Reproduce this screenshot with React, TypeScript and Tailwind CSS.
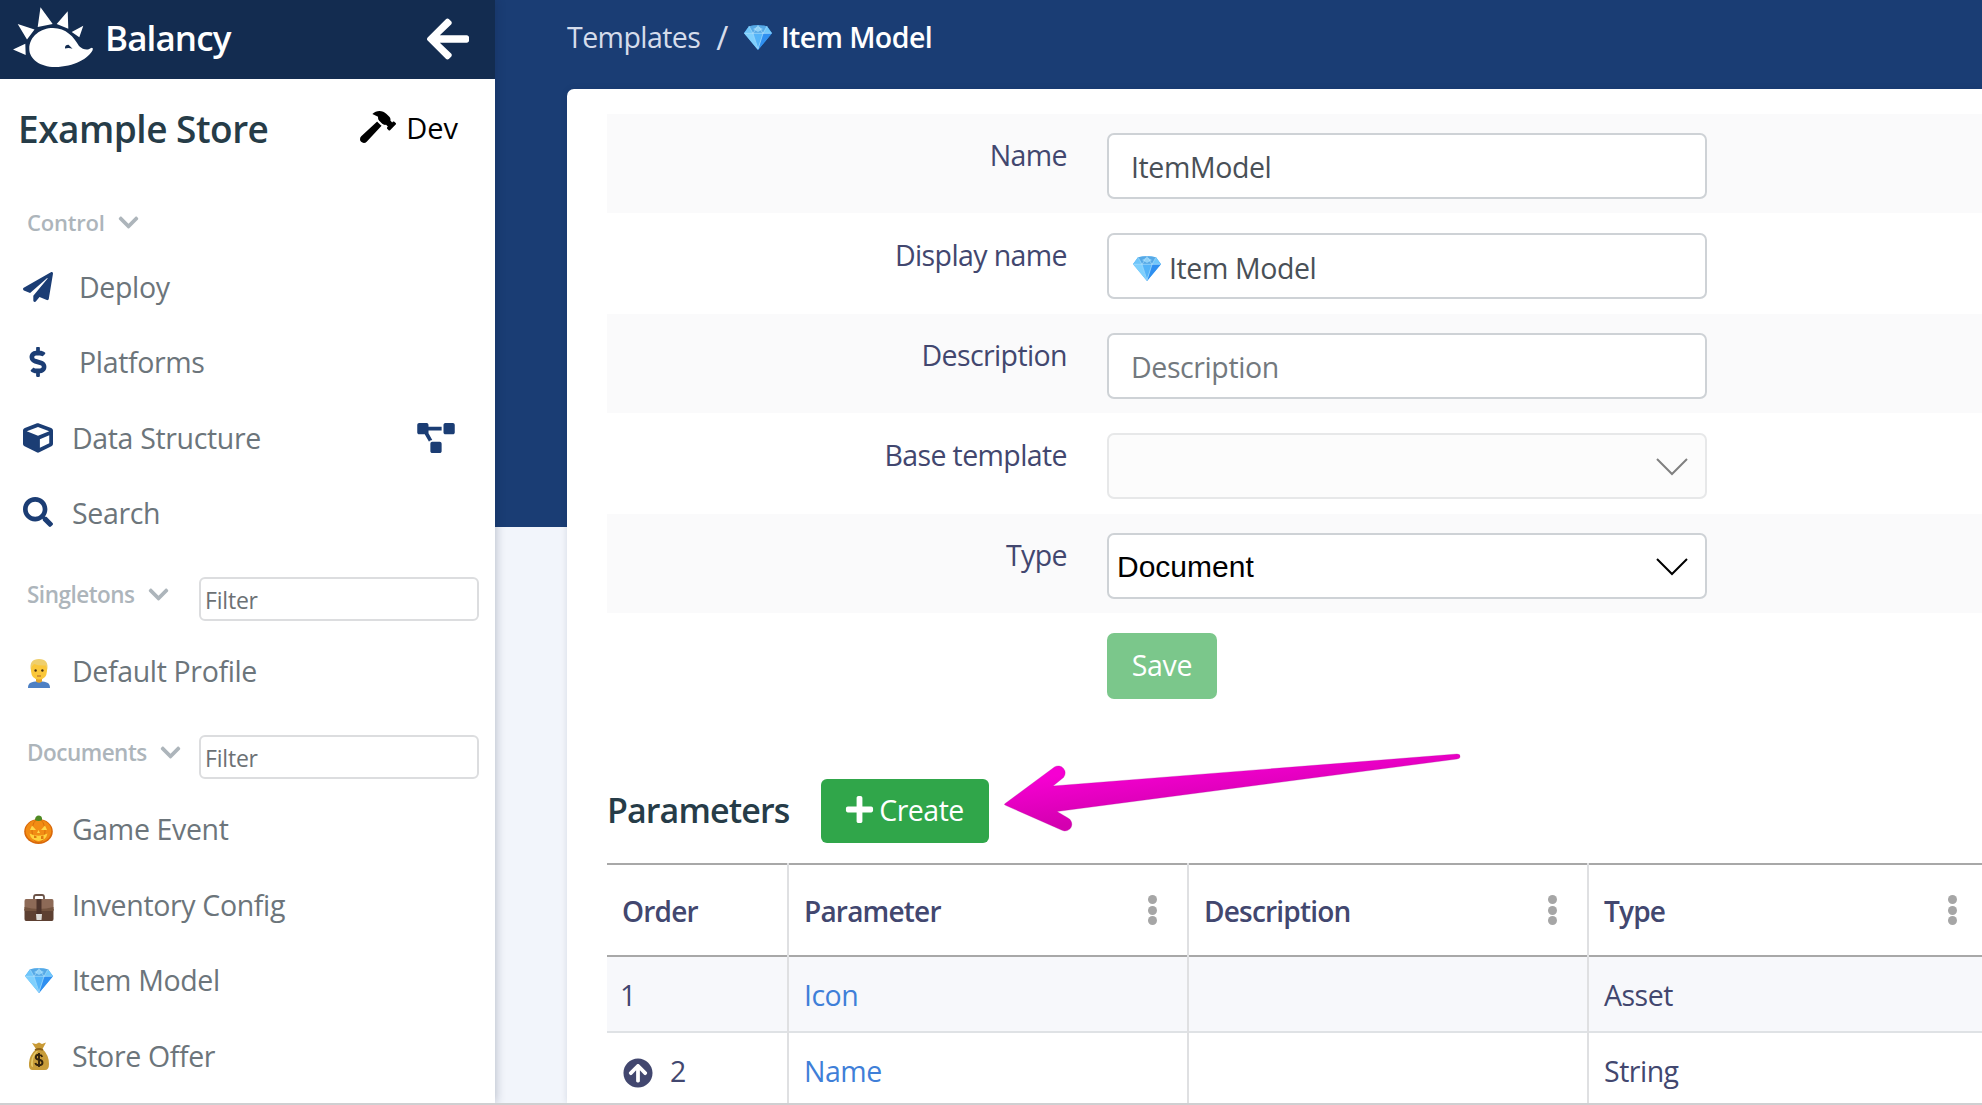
import React from 'react';
import type { ReactNode } from 'react';
import {
  FaArrowCircleUp,
  FaArrowLeft,
  FaChevronDown,
  FaCube,
  FaDollarSign,
  FaHammer,
  FaPaperPlane,
  FaPlus,
  FaProjectDiagram,
  FaSearch,
} from 'react-icons/fa';

function HedgehogLogo() {
  return (
    <svg width="100" height="79" viewBox="0 0 100 79" className="shrink-0" fill="#fff">
      <path d="M13 49.5 25.3 43.7 25.7 55ZM17.7 24 34.5 29.5 27 39.5ZM40.5 7.3 52.7 24 37.7 27ZM67.7 11.3 68.3 28.7 56.7 24ZM83.3 25.7 79.3 37.3 71.7 32Z" />
      <path d="M29.3 49C29.3 36 41 28 53 28C66 28 74 37 79 46C83 50 88 50.5 90.5 48.2Q93.5 47 92.7 50C89 58 74 67 55 67C40 67 29.3 59 29.3 49Z" />
      <path d="M65 48.5Q64.500 45 68.500 44.800L72.500 48.800Q69 47.500 65 48.500Z" fill="#132c50" />
    </svg>
  );
}

function DiamondIcon() {
  return (
    <svg width="28" height="25" viewBox="0 0 28 25" className="shrink-0">
      <path d="M5 1.200Q14 -0.500 23 1.200L28 8 14 25 0 8Z" fill="#4aaef5" />
      <path d="M5 1.200 9 8.500H0ZM23 1.200 19 8.500H28Z" fill="#6fc6fa" />
      <path d="M5 1.200Q14 -0.500 23 1.200L19 8.500H9Z" fill="#56a9e6" />
      <path d="M9 4 14 1.500 19 4 14 7Z" fill="#8fd0f7" />
      <path d="M0 8.200 9 8.500 14 25Z" fill="#7fd0fd" />
      <path d="M9 8.500H19L14 25Z" fill="#54b4f8" />
      <path d="M19 8.500 28 8.200 14 25Z" fill="#2f8ff0" />
      <path d="M5 1.200 9 8.500 14 0.500 19 8.500 23 1.200M0.500 8.300H27.500M9 8.500 14 24 19 8.500" stroke="#b9e5fd" strokeWidth="0.600" fill="none" />
    </svg>
  );
}

function PumpkinIcon() {
  return (
    <svg width="29" height="29" viewBox="0 0 29 29">
      <ellipse cx="14.500" cy="16.500" rx="14.300" ry="12.500" fill="#d9680a" />
      <ellipse cx="14.500" cy="16" rx="12.800" ry="11.300" fill="#f28c14" />
      <ellipse cx="14.500" cy="16" rx="6.500" ry="11.800" fill="none" stroke="#d9700c" strokeWidth="1" />
      <path d="M11 5Q11 0.500 15 0.500Q18.500 0.800 18 5Q14.500 7 11 5Z" fill="#4f8a24" />
      <path d="M8 10.500 12 15H6ZM21 10.500 23 15H17ZM14.500 15 16 18H13Z" fill="#ffd84a" />
      <path d="M5.500 18.500Q14.500 23 23.500 18.500Q22 25.500 14.500 26Q7 25.500 5.500 18.500Z" fill="#ffd23c" />
      <path d="M10 20.500V23H12.500V21.200M17 21.200V24H19.500V20.500" fill="#e07a10" />
    </svg>
  );
}

function BriefcaseIcon() {
  return (
    <svg width="30" height="27" viewBox="0 0 30 27">
      <path d="M10 6V3Q10 1 12 1H18Q20 1 20 3V6" fill="none" stroke="#6b5348" strokeWidth="1.800" />
      <path d="M2 5H28Q29.500 5 29.500 7V16H0.500V7Q0.500 5 2 5Z" fill="#8d6a57" />
      <path d="M0.500 15H29.500V25Q29.500 27 28 27H2Q0.500 27 0.500 25Z" fill="#5d4032" />
      <path d="M0.500 13Q15 17 29.500 13V17H0.500Z" fill="#73533f" />
      <path d="M12.500 5H17.500V20H12.500Z" fill="#4c332b" />
      <path d="M12 20H18L17.500 26H12.500Z" fill="#dcdad7" />
    </svg>
  );
}

function ManIcon() {
  return (
    <svg width="22" height="29" viewBox="0 0 22 29">
      <path d="M0 29C0 24.500 2 23.300 7.500 22.500H14.500C20 23.300 22 24.500 22 29Z" fill="#4d80c4" />
      <path d="M8 17H14V22.500Q11 25 8 22.500Z" fill="#e2a22a" />
      <path d="M3 8Q3 2 11 2Q19 2 19 8V12Q18.500 20.500 11 20.500Q3.500 20.500 3 12Z" fill="#fac73a" />
      <path d="M2.700 11Q1 0 11 0Q21 0 19.300 11L18 6.500Q11 7 6 5L3.800 7.500Z" fill="#efcf6c" />
      <circle cx="7.600" cy="11.500" r="1.200" fill="#4a3214" />
      <circle cx="14.400" cy="11.500" r="1.200" fill="#4a3214" />
      <path d="M9 17H13" stroke="#b9702a" strokeWidth="1.200" />
    </svg>
  );
}

function MoneyBagIcon() {
  return (
    <svg width="22" height="28" viewBox="0 0 22 28">
      <path d="M4 1 8 2 11 0.500 14 2 18 0.500 14.500 7H8Z" fill="#c99a35" />
      <path d="M8 7H14.500Q21 13 21 22Q21 28 17 28H4Q0.500 28 1 21Q1.500 13 8 7Z" fill="#c89d3a" />
      <path d="M8.500 9Q3 14 3 22Q3 25 5 25Q3.500 15 10 9Z" fill="#e6c968" />
      <path d="M7 8Q11 6 15 8" stroke="#8d6218" strokeWidth="1.800" fill="none" />
      <path
        d="M14.300 14.800Q13.500 12.800 11 12.800Q7.800 12.800 7.800 15.200Q7.800 17.200 11 17.800Q14.500 18.400 14.500 20.700Q14.500 23.200 11 23.200Q8 23.200 7.300 21M11 11V25"
        stroke="#33230c"
        strokeWidth="1.900"
        fill="none"
      />
    </svg>
  );
}

function NavItem({ icon, label, wide = false, action }: { icon: ReactNode; label: string; wide?: boolean; action?: ReactNode }) {
  return (
    <div className="flex h-[75.5px] shrink-0 items-center pl-[22px] pr-10">
      <span className={`flex h-8 w-8 shrink-0 items-center justify-center text-[30px] text-[#1b3d74] ${wide ? 'mr-[25px]' : 'mr-[18px]'}`}>
        {icon}
      </span>
      <span className="whitespace-nowrap pt-px text-[28.5px] font-[450] tracking-[-0.35px] text-[#6c757b]">{label}</span>
      {action && <span className="ml-auto">{action}</span>}
    </div>
  );
}

function FilterSection({ label }: { label: string }) {
  return (
    <div className="flex h-[82.500px] shrink-0 items-start justify-between pl-[27px] pr-4 pt-[26px]">
      <div className="flex h-[35px] items-center">
        <span className="text-[22.500px] font-semibold tracking-[-0.5px] text-[#adb5bb]">{label}</span>
        <FaChevronDown className="ml-3 text-[23px] text-[#adb5bb]" />
      </div>
      <input
        className="h-11 w-[280px] rounded-[6px] border-2 border-[#dcdddf] bg-white pl-1 pt-0.5 text-[23px] font-[450] tracking-[-0.2px] placeholder:text-[#6c7175] placeholder:opacity-100"
        placeholder="Filter"
      />
    </div>
  );
}

function Sidebar() {
  return (
    <aside className="z-10 flex w-[495px] shrink-0 flex-col bg-white shadow-[0_0_10px_rgba(20,30,60,0.3)]">
      <div className="flex h-[79px] shrink-0 items-center bg-[#132c50]">
        <HedgehogLogo />
        <span className="ml-[5px] pb-0.5 text-[35px] font-semibold tracking-[-0.9px] text-white">Balancy</span>
        <FaArrowLeft className="mb-px ml-auto mr-[23px] text-[48px] text-white" />
      </div>
      <div className="flex h-[99px] shrink-0 items-center pl-[18px] pr-9">
        <span className="text-[37px] font-semibold tracking-[-0.5px] text-[#263c48]">Example Store</span>
        <FaHammer className="mb-1 ml-auto h-8 w-9 text-black" />
        <span className="ml-[10px] mr-px pb-0.5 text-[29px] font-[450] text-black">Dev</span>
      </div>
      <div className="mt-[18px] flex h-[53px] shrink-0 items-center pl-[27px]">
        <span className="text-[22px] font-semibold tracking-[-0.2px] text-[#adb5bb]">Control</span>
        <FaChevronDown className="ml-3 text-[23px] text-[#adb5bb]" />
      </div>
      <NavItem wide icon={<FaPaperPlane />} label="Deploy" />
      <NavItem wide icon={<FaDollarSign />} label="Platforms" />
      <NavItem icon={<FaCube />} label="Data Structure" action={<FaProjectDiagram className="h-[30px] w-[38px] text-[#1b3d74]" />} />
      <NavItem icon={<FaSearch className="mb-0.5" />} label="Search" />
      <FilterSection label="Singletons" />
      <NavItem icon={<span className="ml-0.5 mt-1"><ManIcon /></span>} label="Default Profile" />
      <FilterSection label="Documents" />
      <NavItem icon={<span className="ml-px"><PumpkinIcon /></span>} label="Game Event" />
      <NavItem icon={<span className="ml-px mt-1.5"><BriefcaseIcon /></span>} label="Inventory Config" />
      <NavItem icon={<span className="ml-0.5"><DiamondIcon /></span>} label="Item Model" />
      <NavItem icon={<span className="ml-0.5"><MoneyBagIcon /></span>} label="Store Offer" />
    </aside>
  );
}

function FormRow({ label, striped = false, children }: { label: string; striped?: boolean; children: ReactNode }) {
  return (
    <div className={`mb-px flex h-[99px] shrink-0 ${striped ? 'bg-[#fafafb]' : ''}`}>
      <div className="flex h-[82px] w-[460px] items-center justify-end text-[28.5px] font-[450] tracking-[-0.6px] text-[#42476f]">{label}</div>
      <div className="ml-10 mt-[19px] w-[600px]">{children}</div>
    </div>
  );
}

function SelectBox({ value, disabled = false }: { value: string; disabled?: boolean }) {
  return (
    <div
      className={`flex h-[66px] items-center justify-between rounded-[7px] border-2 pl-2 pr-[17px] font-['Liberation_Sans',sans-serif] text-[30px] text-black ${
        disabled ? 'border-[#e7e8e9] bg-[#fcfcfc]' : 'border-[#ced2d6] bg-white'
      }`}
    >
      <span>{value}</span>
      <svg width="32" height="18" viewBox="0 0 32 18" className="mt-0.5" fill="none" stroke={disabled ? '#808080' : '#000'} strokeWidth="2">
        <path d="M1 1 16 16 31 1" />
      </svg>
    </div>
  );
}

const inputClass =
  'block h-[66px] w-full rounded-[7px] border-2 border-[#ced2d6] bg-white px-[22px] pt-0.5 text-[28.5px] font-[450] tracking-[-0.4px] text-[#495057] placeholder:text-[#73797e] placeholder:opacity-100';

function Kebab() {
  return (
    <span className="flex flex-col gap-[1.500px]">
      <span className="size-[9px] rounded-full bg-[#a6a6a6]" />
      <span className="size-[9px] rounded-full bg-[#a6a6a6]" />
      <span className="size-[9px] rounded-full bg-[#a6a6a6]" />
    </span>
  );
}

const gridClass = 'grid shrink-0 grid-cols-[182px_400px_400px_400px]';

function HeaderCell({ label, menu = true }: { label: string; menu?: boolean }) {
  return (
    <div className="border-r-2 border-[#dfe0e2]">
      <div className="flex h-[94px] items-center justify-between border-y-2 border-[#a8a8a8] pl-[15px] pr-[30px]">
        <span className="pt-0.5 text-[28px] font-semibold tracking-[-0.8px] text-[#42476f]">{label}</span>
        {menu && <Kebab />}
      </div>
    </div>
  );
}

function BodyCell({ children, shaded = false, link = false }: { children?: ReactNode; shaded?: boolean; link?: boolean }) {
  return (
    <div className="border-r-2 border-[#dfe0e2]">
      <div
        className={`flex h-[76px] items-center border-b-2 border-[#dfe2e5] pl-[15px] pt-0.5 text-[28.5px] font-[450] tracking-[-0.5px] ${
          shaded ? 'bg-[#f7f8fb]' : 'bg-white'
        } ${link ? 'text-[#3f7fd8]' : 'text-[#42476f]'}`}
      >
        {children}
      </div>
    </div>
  );
}

function PointerArrow() {
  return (
    <svg className="absolute left-[1000px] top-[745px]" width="470" height="95" viewBox="1000 745 470 95">
      <defs>
        <linearGradient id="pointer" x1="1060" y1="775" x2="1065" y2="825" gradientUnits="userSpaceOnUse">
          <stop offset="0" stopColor="#f600d2" />
          <stop offset="1" stopColor="#d400b0" />
        </linearGradient>
      </defs>
      <path
        d="M1004.500 804 1054.500 767A7 7 0 0 1 1063.500 777.500L1053 786 1457 754Q1460.500 754 1460 757 1460 758.500 1457 759L1057 811.500 1068 818A6.700 6.700 0 0 1 1062 830.300L1006 805.500Q1004 804.700 1004.500 804Z"
        fill="url(#pointer)"
        stroke="#b0109a"
        strokeOpacity="0.35"
        strokeWidth="0.8"
      />
    </svg>
  );
}

export default function App() {
  return (
    <div className="relative flex h-[1105px] w-full flex-col overflow-hidden bg-[#f2f5fb] font-['Open_Sans',sans-serif]">
      <div className="flex h-[1103px] shrink-0 overflow-hidden">
        <Sidebar />
        <main className="flex min-w-0 flex-1 flex-col overflow-hidden bg-[linear-gradient(#1a3d74_527px,#f2f5fb_527px)] pl-[72px]">
          <div className="mb-4 flex h-[73px] shrink-0 items-center whitespace-nowrap pt-px text-[28.5px] font-[450] tracking-[-0.55px] text-[#d5dceb]">
            <span>Templates</span>
            <span className="ml-4 mr-4 text-[33px] leading-none">/</span>
            <span className="flex items-center gap-[9px] font-semibold text-white">
              <DiamondIcon />
              <span>Item Model</span>
            </span>
          </div>
          <div className="flex min-h-0 flex-1 flex-col overflow-hidden rounded-tl-[7px] bg-white pl-10 pt-[25px] shadow-[0_0_6px_rgba(20,30,60,0.12)]">
            <FormRow label="Name" striped>
              <input className={inputClass} defaultValue="ItemModel" />
            </FormRow>
            <FormRow label="Display name">
              <div className={inputClass}>
                <div className="flex h-full items-center gap-2 pl-0.5 pt-[3px]">
                  <DiamondIcon />
                  <span>Item Model</span>
                </div>
              </div>
            </FormRow>
            <FormRow label="Description" striped>
              <input className={inputClass} placeholder="Description" />
            </FormRow>
            <FormRow label="Base template">
              <SelectBox value="" disabled />
            </FormRow>
            <FormRow label="Type" striped>
              <SelectBox value="Document" />
            </FormRow>
            <FormRow label="">
              <button className="h-[66px] w-[110px] rounded-[7px] bg-[#7bc78b] pb-0.5 text-[28.5px] font-[450] tracking-[-0.35px] text-white">Save</button>
            </FormRow>
            <div className="mb-5 mt-[65px] flex h-16 shrink-0 items-center">
              <h2 className="w-[214px] pb-0.5 text-[34px] font-semibold tracking-[-0.9px] text-[#263c48]">Parameters</h2>
              <button className="flex h-16 w-[168px] items-center justify-center gap-1 rounded-[6px] bg-[#30a64a] pb-0.5 pr-0.5 text-[28.5px] font-[450] tracking-[-0.5px] text-white">
                <FaPlus className="mb-0.5 text-[31px]" />
                <span>Create</span>
              </button>
            </div>
            <div className={gridClass}>
              <HeaderCell label="Order" menu={false} />
              <HeaderCell label="Parameter" />
              <HeaderCell label="Description" />
              <HeaderCell label="Type" />
              <BodyCell shaded>
                <span className="-ml-0.5">1</span>
              </BodyCell>
              <BodyCell shaded link>Icon</BodyCell>
              <BodyCell shaded />
              <BodyCell shaded>Asset</BodyCell>
              <BodyCell>
                <FaArrowCircleUp className="ml-px mr-[17px] mt-1 text-[30px]" />2
              </BodyCell>
              <BodyCell link>Name</BodyCell>
              <BodyCell />
              <BodyCell>String</BodyCell>
            </div>
          </div>
        </main>
      </div>
      <div className="h-[2px] shrink-0 bg-[#cfcfd1]" />
      <PointerArrow />
    </div>
  );
}
